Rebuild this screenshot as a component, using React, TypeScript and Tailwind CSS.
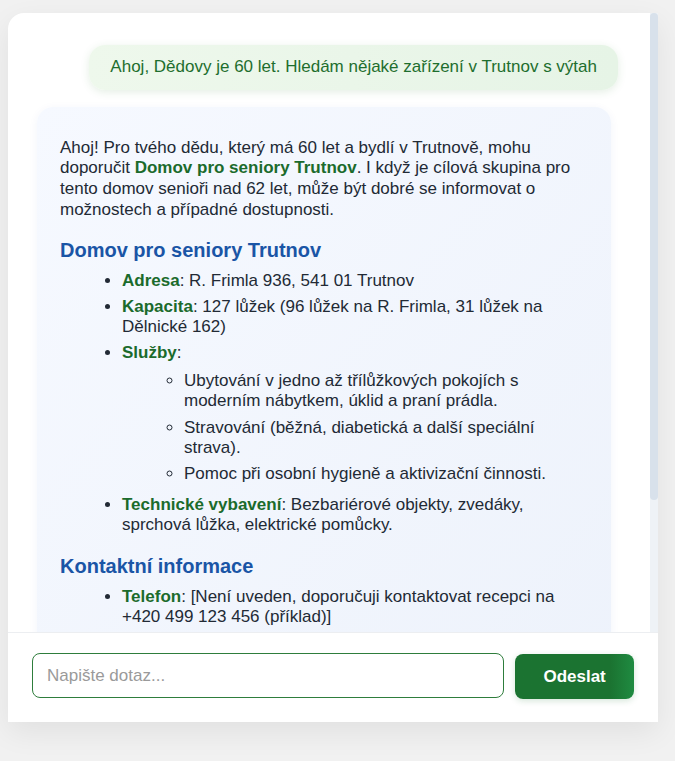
import React from 'react';

const sans = { fontFamily: '"Liberation Sans", Arial, sans-serif' };

function B({ children }: { children: React.ReactNode }) {
  return <strong className="font-bold text-[#1b6b2c]">{children}</strong>;
}

export default function App() {
  return (
    <div className="min-h-screen bg-[#f1f1f1] pt-[13px] pl-[8px]" style={sans}>
      <div className="w-[650px] h-[709px] bg-white rounded-tl-2xl shadow-[0_10px_30px_rgba(0,0,0,0.07)] flex flex-col">
        {/* Messages + scrollbar */}
        <div className="h-[619px] flex">
          <div className="w-[642px] overflow-hidden pt-[32px] pl-[29px] pr-[32px]">
            <div className="flex justify-end">
              <div className="rounded-2xl bg-gradient-to-r from-[#eef8ec] to-[#e6f4e6] px-[21px] py-3 text-[17px] leading-[20.8px] text-[#1e6e2e] shadow-[0_2px_8px_rgba(46,125,50,0.13)]">
                Ahoj, Dědovy je 60 let. Hledám nějaké zařízení v Trutnov s výtah
              </div>
            </div>

            <div className="mt-[17px] w-[574px] rounded-2xl bg-gradient-to-br from-[#f6f9ff] to-[#edf2fb] shadow-[0_2px_10px_rgba(30,64,175,0.06)] pt-[31px] px-[23px] pb-[29px] text-[17px] leading-[20.6px] text-[#222a35]">
              <p>
                Ahoj! Pro tvého dědu, který má 60 let a bydlí v Trutnově, mohu doporučit{' '}
                <B>Domov pro seniory Trutnov</B>. I když je cílová skupina pro tento domov senioři nad 62
                let, může být dobré se informovat o možnostech a případné dostupnosti.
              </p>

              <h3 className="mt-[18px] text-[20px] leading-[24.7px] font-bold text-[#1a55a6]">
                Domov pro seniory Trutnov
              </h3>
              <ul className="mt-[8px] list-disc pl-[62px] leading-[20.4px]">
                <li className="mb-[5.5px]">
                  <B>Adresa</B>: R. Frimla 936, 541 01 Trutnov
                </li>
                <li className="mb-[5.5px]">
                  <B>Kapacita</B>: 127 lůžek (96 lůžek na R. Frimla, 31 lůžek na Dělnické 162)
                </li>
                <li className="mb-[5.5px] pb-[5px]">
                  <B>Služby</B>:
                  <ul className="mt-[7.5px] list-[circle] pl-[62px]">
                    <li className="mb-[6px]">
                      Ubytování v jedno až třílůžkových pokojích s moderním nábytkem, úklid a praní prádla.
                    </li>
                    <li className="mb-[5.5px]">
                      Stravování (běžná, diabetická a další speciální strava).
                    </li>
                    <li>Pomoc při osobní hygieně a aktivizační činnosti.</li>
                  </ul>
                </li>
                <li className="mb-[5.5px]">
                  <B>Technické vybavení</B>: Bezbariérové objekty, zvedáky, sprchová lůžka, elektrické pomůcky.
                </li>
              </ul>

              <h3 className="mt-[18px] text-[20px] leading-[24.7px] font-bold text-[#1a55a6]">
                Kontaktní informace
              </h3>
              <ul className="mt-[8px] list-disc pl-[62px] leading-[20.6px]">
                <li className="mb-[5.5px]">
                  <B>Telefon</B>: [Není uveden, doporučuji kontaktovat recepci na +420 499 123 456 (příklad)]
                </li>
                <li className="mb-[5.5px]">
                  <B>E-mail</B>: [Není uveden]
                </li>
                <li className="mb-[5.5px]">
                  <B>Web</B>: [Není uveden]
                </li>
              </ul>
              <p className="mt-[11px]">
                Doporučuji se předem telefonicky domluvit na prohlídce a ověřit, zda je v budově výtah.
              </p>
            </div>
          </div>
          <div className="w-[8px] bg-[#eef2f6] flex flex-col">
            <div className="h-[487px] rounded-full bg-[#d8e1eb]" />
          </div>
        </div>

        {/* Input bar */}
        <div className="flex-1 border-t border-[#eceef1] flex items-start gap-[11px] pt-[20px] px-[24px]">
          <input
            autoFocus
            placeholder="Napište dotaz..."
            className="w-[473px] h-[45px] rounded-lg border border-[#2e7d3c] px-[14px] text-[17px] text-[#222] placeholder:text-[#9a9a9a] outline-none caret-[#1a6ff5]"
            style={sans}
          />
          <button
            className="w-[119px] h-[45px] mt-px rounded-lg bg-gradient-to-r from-[#1b7331] via-[#1b7331] via-80% to-[#1f8b41] text-white text-[17px] font-bold shadow-[0_2px_6px_rgba(27,115,49,0.18)]"
            style={sans}
          >
            Odeslat
          </button>
        </div>
      </div>
    </div>
  );
}
